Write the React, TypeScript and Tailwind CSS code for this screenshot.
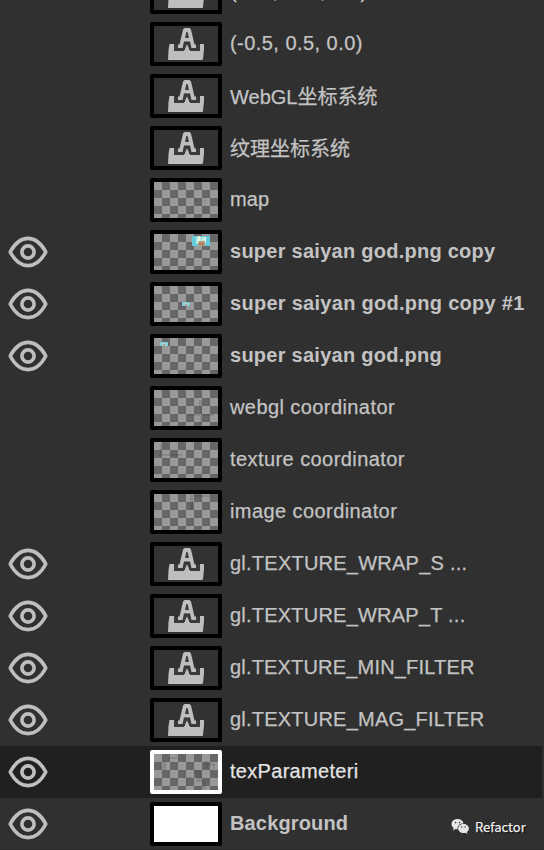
import React from "react";
import clsx from "clsx";

type Thumb = "text" | "checker" | "white";

interface Layer {
  name: string;
  thumb: Thumb;
  visible?: boolean;
  bold?: boolean;
  selected?: boolean;
  tracking?: string;
  art?: React.ReactNode;
}

const Eye = () => (
  <svg width="40" height="32" viewBox="0 0 40 32" fill="none" stroke="#bfbfbf">
    <path d="M2.200 16C7 7 13 2.400 20 2.400S33 7 37.800 16C33 25 27 29.600 20 29.600S7 25 2.200 16Z" strokeWidth="3.6" strokeLinejoin="round" />
    <circle cx="20" cy="16" r="6.1" strokeWidth="3.6" />
  </svg>
);

const TextGlyph = () => (
  <svg width="64" height="36" viewBox="0 0 64 36">
    <path d="M15.500 18H20V24H46V18H50V23L49 33.500L48 34H14L14.500 24Z" fill="#bebebe" />
    <path d="M20 19H24V17H42V19H46V25H36V22.500H35L33 19L31 22.500H30V25H20Z" fill="#3b3b3b" />
    <path d="M31 22.500L33 18.500L35 22.500V25H31Z" fill="#bebebe" />
    <path d="M30.500 2H35.500L37 3.500L40.500 18.500H42V22H37.500L36 15.500H30L28.500 22H24V18.500H25.500L29 3.500Z" fill="#bebebe" />
    <path d="M32.400 6H33.600L35 12H31Z" fill="#3b3b3b" />
  </svg>
);

const CopyArt = () => (
  <g>
    <path d="M38 2H56V12H38Z" fill="#62cbdc" />
    <path d="M42 3H52V10H42Z" fill="#b5e9df" />
    <path d="M44 2H46V7H44ZM50 3H52V8H50Z" fill="#e8f4dc" />
    <path d="M45 7H51V12H45Z" fill="#b59c7e" />
    <path d="M44 9H50V11H44Z" fill="#b37b55" />
  </g>
);

const SmallArt = ({ x, y }: { x: number; y: number }) => (
  <g transform={`translate(${x} ${y})`}>
    <path d="M0 0H8V4H0Z" fill="#7dcdd6" />
    <path d="M2 1H6V3H2Z" fill="#b3d5c9" />
    <path d="M3 2H5V4H3Z" fill="#a9a595" />
  </g>
);

const Smudge = ({ d }: { d: string }) => <path d={d} fill="#303030" opacity="0.16" />;

const layers: Layer[] = [
  { name: "(-0.5, -0.5, 0.0)", thumb: "text", tracking: "tracking-[0.3px]" },
  { name: "(-0.5, 0.5, 0.0)", thumb: "text", tracking: "tracking-[0.45px]" },
  { name: "WebGL坐标系统", thumb: "text", tracking: "relative top-0.5" },
  { name: "纹理坐标系统", thumb: "text", tracking: "relative top-0.5" },
  { name: "map", thumb: "checker", tracking: "tracking-[0.1px]", art: <Smudge d="M35 11H37V13H35ZM50 18H52V20H50ZM41 17H43V20H41ZM51 27H52V30H51Z" /> },
  { name: "super saiyan god.png copy", thumb: "checker", visible: true, bold: true, tracking: "tracking-[0.26px]", art: <CopyArt /> },
  { name: "super saiyan god.png copy #1", thumb: "checker", visible: true, bold: true, tracking: "tracking-[0.28px]", art: <SmallArt x={28} y={16} /> },
  { name: "super saiyan god.png", thumb: "checker", visible: true, bold: true, tracking: "tracking-[0.26px]", art: <SmallArt x={6} y={4} /> },
  { name: "webgl coordinator", thumb: "checker", tracking: "tracking-[0.42px]", art: <Smudge d="M45 10H48V24H60V26H48V34H46V26H34V24H46Z" /> },
  { name: "texture coordinator", thumb: "checker", tracking: "tracking-[0.43px]", art: <Smudge d="M6 2H8V12H28V14H5V12H6Z" /> },
  { name: "image coordinator", thumb: "checker", tracking: "tracking-[0.42px]", art: <Smudge d="M36 1H56V3H39V16H36Z" /> },
  { name: "gl.TEXTURE_WRAP_S ...", thumb: "text", visible: true, tracking: "tracking-[0.24px]" },
  { name: "gl.TEXTURE_WRAP_T ...", thumb: "text", visible: true, tracking: "tracking-[0.22px]" },
  { name: "gl.TEXTURE_MIN_FILTER", thumb: "text", visible: true, tracking: "tracking-[0.18px]" },
  { name: "gl.TEXTURE_MAG_FILTER", thumb: "text", visible: true, tracking: "tracking-[0.22px]" },
  {
    name: "texParameteri",
    thumb: "checker",
    visible: true,
    selected: true,
    tracking: "tracking-[0.3px]",
    art: <Smudge d="M9 7H12V16H9ZM14 3H24V5H14ZM51 7H54V15H51ZM55 9H61V15H59V12H55ZM32 23H38V25H34V32H32ZM40 16H48V26H52V35H48V28H42V20H40Z" />,
  },
  { name: "Background", thumb: "white", visible: true, bold: true, tracking: "tracking-[0.15px]" },
];

const Thumbnail = ({ layer }: { layer: Layer }) => (
  <div
    className={clsx(
      "h-11 w-[72px] shrink-0 rounded-[2px] border-4",
      layer.selected ? "border-white" : "border-black",
      layer.thumb === "white" ? "bg-white" : "bg-[#323232]",
    )}
  >
    {layer.thumb === "text" && <TextGlyph />}
    {layer.thumb === "checker" && (
      <div className="h-9 w-16 bg-[repeating-conic-gradient(#666666_0_25%,#999999_0_50%)] bg-[length:16px_16px]">
        <svg width="64" height="36" viewBox="0 0 64 36" shapeRendering="crispEdges">
          {layer.art}
        </svg>
      </div>
    )}
  </div>
);

const Row = ({ layer }: { layer: Layer }) => (
  <div className={clsx("mr-0.5 flex h-[52px] shrink-0 items-center", layer.selected && "bg-[#202020]")}>
    <div className="flex w-[150px] shrink-0 pl-2">{layer.visible && <Eye />}</div>
    <Thumbnail layer={layer} />
    <span
      className={clsx(
        "ml-2 whitespace-pre pb-0.5 text-[20px] leading-6",
        layer.bold ? "font-bold" : "[-webkit-text-stroke:0.25px_currentColor]",
        layer.selected ? "text-[#e4e4e4]" : "text-[#c3c3c3]",
        layer.tracking,
      )}
    >
      {layer.name}
    </span>
  </div>
);

const Watermark = () => (
  <div className="absolute left-[451px] top-[817px] flex items-center gap-[5px]">
    <svg width="19" height="18" viewBox="0 0 19 18">
      <path d="M6.500 1C3 1 .5 3.200.5 6c0 1.700.900 3 2.200 4L2 12.500l2.600-1.400c.7.200 1.300.200 2 .200C6.200 7.500 9 5.300 12.600 5.200 12 2.700 9.600 1 6.500 1Z" fill="#e6e6e6" />
      <path d="M12.400 6C9.500 6 7.200 8 7.200 10.500S9.500 15 12.400 15c.7 0 1.300-.1 1.900-.3l2.100 1.200-.5-1.900c1.200-.8 2-2 2-3.500C17.900 8 15.400 6 12.400 6Z" fill="#e6e6e6" />
      <g fill="#303030">
        <circle cx="4.600" cy="4.600" r=".8" />
        <circle cx="8.600" cy="4.600" r=".8" />
        <circle cx="10.700" cy="9" r=".7" />
        <circle cx="14.200" cy="9" r=".7" />
      </g>
    </svg>
    <span className="font-['Noto_Sans_CJK_SC',sans-serif] text-[13px] leading-5 text-[#f0f0f0] [-webkit-text-stroke:0.25px_currentColor] [text-shadow:1px_1px_1px_#000]">
      Refactor
    </span>
  </div>
);

export default function App() {
  return (
    <div className="relative flex h-[850px] w-[544px] flex-col justify-end overflow-hidden border-b border-[#2b282b] bg-[#303030] font-['Liberation_Sans','Noto_Sans_CJK_SC',sans-serif]">
      <div className="-mb-px flex shrink-0 flex-col">
        {layers.map((layer) => (
          <Row key={layer.name} layer={layer} />
        ))}
      </div>
      <Watermark />
    </div>
  );
}
